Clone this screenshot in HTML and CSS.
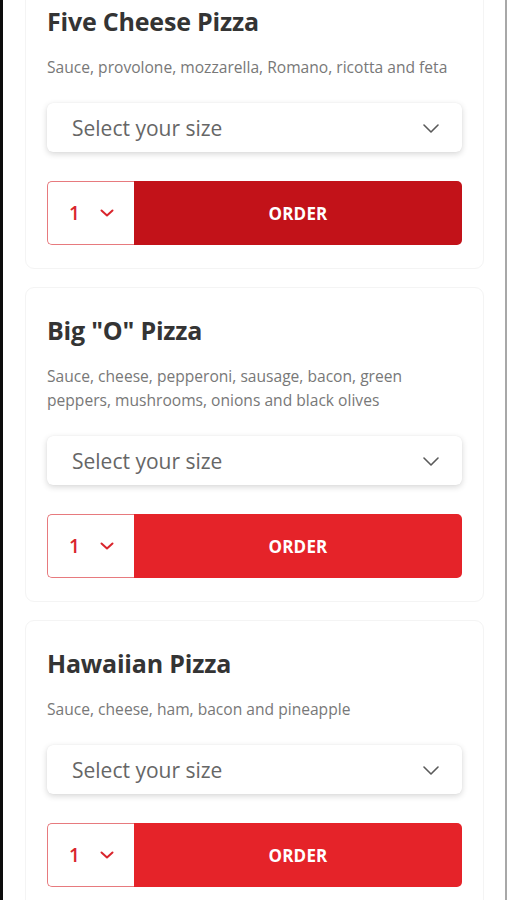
FILE: index.html
```html
<!DOCTYPE html>
<html lang="en">
<head>
<meta charset="utf-8">
<title>Pizza menu</title>
<link rel="stylesheet" href="styles.css">
</head>
<body>
<div class="page">
  <div class="list">
    <section class="card">
      <h2 class="title">Five Cheese Pizza</h2>
      <p class="desc">Sauce, provolone, mozzarella, Romano, ricotta and feta</p>
      <div class="select">
        <span>Select your size</span>
        <svg class="chev" width="16" height="9" viewBox="0 0 16 9"><path d="M1 1 L8 8 L15 1" fill="none" stroke="#5a5a5a" stroke-width="1.6" stroke-linecap="round" stroke-linejoin="round"/></svg>
      </div>
      <div class="order-row">
        <div class="qty">
          <span class="num">1</span>
          <svg width="14" height="8" viewBox="0 0 14 8"><path d="M1.5 1.5 L7 6.5 L12.5 1.5" fill="none" stroke="#d9252c" stroke-width="2" stroke-linecap="round" stroke-linejoin="round"/></svg>
        </div>
        <button class="order dark">ORDER</button>
      </div>
    </section>

    <section class="card">
      <h2 class="title">Big "O" Pizza</h2>
      <p class="desc">Sauce, cheese, pepperoni, sausage, bacon, green peppers, mushrooms, onions and black olives</p>
      <div class="select">
        <span>Select your size</span>
        <svg class="chev" width="16" height="9" viewBox="0 0 16 9"><path d="M1 1 L8 8 L15 1" fill="none" stroke="#5a5a5a" stroke-width="1.6" stroke-linecap="round" stroke-linejoin="round"/></svg>
      </div>
      <div class="order-row">
        <div class="qty">
          <span class="num">1</span>
          <svg width="14" height="8" viewBox="0 0 14 8"><path d="M1.5 1.5 L7 6.5 L12.5 1.5" fill="none" stroke="#d9252c" stroke-width="2" stroke-linecap="round" stroke-linejoin="round"/></svg>
        </div>
        <button class="order">ORDER</button>
      </div>
    </section>

    <section class="card">
      <h2 class="title">Hawaiian Pizza</h2>
      <p class="desc">Sauce, cheese, ham, bacon and pineapple</p>
      <div class="select">
        <span>Select your size</span>
        <svg class="chev" width="16" height="9" viewBox="0 0 16 9"><path d="M1 1 L8 8 L15 1" fill="none" stroke="#5a5a5a" stroke-width="1.6" stroke-linecap="round" stroke-linejoin="round"/></svg>
      </div>
      <div class="order-row">
        <div class="qty">
          <span class="num">1</span>
          <svg width="14" height="8" viewBox="0 0 14 8"><path d="M1.5 1.5 L7 6.5 L12.5 1.5" fill="none" stroke="#d9252c" stroke-width="2" stroke-linecap="round" stroke-linejoin="round"/></svg>
        </div>
        <button class="order">ORDER</button>
      </div>
    </section>
  </div>
</div>
</body>
</html>
```
FILE: styles.css
```css
* { box-sizing: border-box; }
html, body { margin: 0; padding: 0; background: #fff; }
body {
  font-family: "Open Sans", "Noto Sans", sans-serif;
  color: #333;
  overflow: hidden;
}
.page {
  border-left: 3px solid #0c0c0c;
  border-right: 2px solid #a8a8a8;
  min-height: 100vh;
  padding: 0 21px 0 22px;
}
.list {
  display: flex;
  flex-direction: column;
  gap: 18px;
  margin-top: -22px;
}
.card {
  border: 1px solid #f4f4f4;
  border-radius: 9px;
  background: #fff;
  padding: 26px 21px 23px 21px;
}
.title {
  margin: 0;
  font-size: 25px;
  line-height: 32px;
  font-weight: 700;
  color: #343434;
  letter-spacing: -0.2px;
}
.desc {
  margin: 18px 0 0 0;
  font-size: 15.6px;
  line-height: 24px;
  color: #787878;
  letter-spacing: 0;
}
.select {
  margin-top: 24px;
  height: 49px;
  border-radius: 6px;
  background: #fff;
  box-shadow: 0 2px 6px rgba(0,0,0,0.16), 0 0 1px rgba(0,0,0,0.08);
  display: flex;
  align-items: center;
  justify-content: space-between;
  padding: 0 23px 0 25px;
  font-size: 21px;
  color: #666;
}
.chev { display: block; margin-top: 1px; }
.order-row {
  margin-top: 29px;
  height: 64px;
  display: flex;
}
.qty {
  width: 87px;
  border: 1.5px solid #e77a7e;
  border-right: none;
  border-radius: 5px 0 0 5px;
  display: flex;
  align-items: center;
  gap: 20px;
  padding-left: 21px;
  color: #d9252c;
}
.num { font-size: 19px; font-weight: 600; }
.order {
  flex: 1;
  border: none;
  border-radius: 0 5px 5px 0;
  background: #e52329;
  color: #fff;
  font-family: inherit;
  font-size: 17px;
  font-weight: 700;
  letter-spacing: 0.2px;
  padding: 0;
}
.order.dark { background: #c21219; }
```
